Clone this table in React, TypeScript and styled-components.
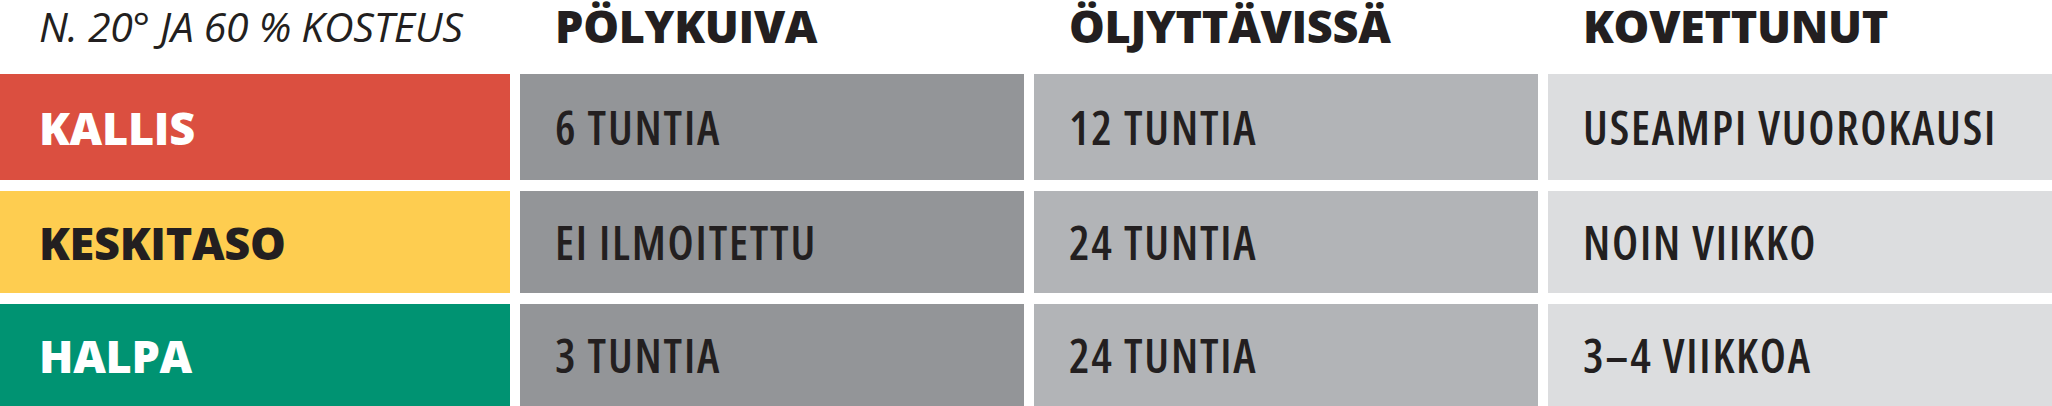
import React from 'react';
import styled, {createGlobalStyle} from 'styled-components';

const GlobalStyle = createGlobalStyle`
    body{
        margin: 0;
        background: #ffffff;
        font-family: "Open Sans", "DejaVu Sans Condensed", sans-serif;
        color: #231f20;
    }
`;

const Table = styled.div`
    width: 2052px;
    height: 406px;
    overflow: hidden;
    background: #ffffff;
`;

const HeaderRow = styled.div`
    display: grid;
    grid-template-columns: 510px repeat(3, 504px);
    column-gap: 10px;
    height: 74px;
`;

const Body = styled.div`
    display: grid;
    grid-template-columns: 510px repeat(3, 504px);
    grid-template-rows: 106px 102px 102px;
    column-gap: 10px;
    row-gap: 11px;
`;

const Caption = styled.div`
    padding: 3px 0 0 39px;
    font-size: 41px;
    line-height: 1.16;
    font-style: italic;
    font-weight: 400;
    font-stretch: 100%;
    letter-spacing: -0.3px;
    white-space: nowrap;
`;

const Heading = styled.div`
    padding-left: 35px;
    font-size: 45px;
    line-height: 1.16;
    font-weight: 800;
    font-stretch: 100%;
    letter-spacing: -0.3px;
    white-space: nowrap;
`;

const Label = styled.div<{$bg: string; $fg: string}>`
    display: flex;
    align-items: center;
    padding-left: 39px;
    background: ${p => p.$bg};
    color: ${p => p.$fg};
    font-size: 45px;
    font-weight: 800;
    font-stretch: 100%;
    letter-spacing: -0.3px;
    white-space: nowrap;
`;

const Cell = styled.div<{$bg: string}>`
    display: flex;
    align-items: center;
    padding-left: 35px;
    background: ${p => p.$bg};
    font-size: 46px;
    font-weight: 600;
    font-stretch: 75%;
    letter-spacing: 1.8px;
    white-space: nowrap;
`;

const shades = ['#939598', '#b2b4b7', '#dcdddf'];

const rows = [
    {label: 'KALLIS', bg: '#db4f40', fg: '#ffffff', values: ['6 TUNTIA', '12 TUNTIA', 'USEAMPI VUOROKAUSI']},
    {label: 'KESKITASO', bg: '#fecd50', fg: '#231f20', values: ['EI ILMOITETTU', '24 TUNTIA', 'NOIN VIIKKO']},
    {label: 'HALPA', bg: '#009372', fg: '#ffffff', values: ['3 TUNTIA', '24 TUNTIA', '3–4 VIIKKOA']},
];

export default function App() {
    return (
        <>
            <GlobalStyle />
            <Table>
                <HeaderRow>
                    <Caption>N. 20° JA 60 % KOSTEUS</Caption>
                    <Heading>PÖLYKUIVA</Heading>
                    <Heading>ÖLJYTTÄVISSÄ</Heading>
                    <Heading>KOVETTUNUT</Heading>
                </HeaderRow>
                <Body>
                    {rows.map(row => (
                        <React.Fragment key={row.label}>
                            <Label $bg={row.bg} $fg={row.fg}>{row.label}</Label>
                            {row.values.map((v, i) => (
                                <Cell key={i} $bg={shades[i]}>{v}</Cell>
                            ))}
                        </React.Fragment>
                    ))}
                </Body>
            </Table>
        </>
    );
}
